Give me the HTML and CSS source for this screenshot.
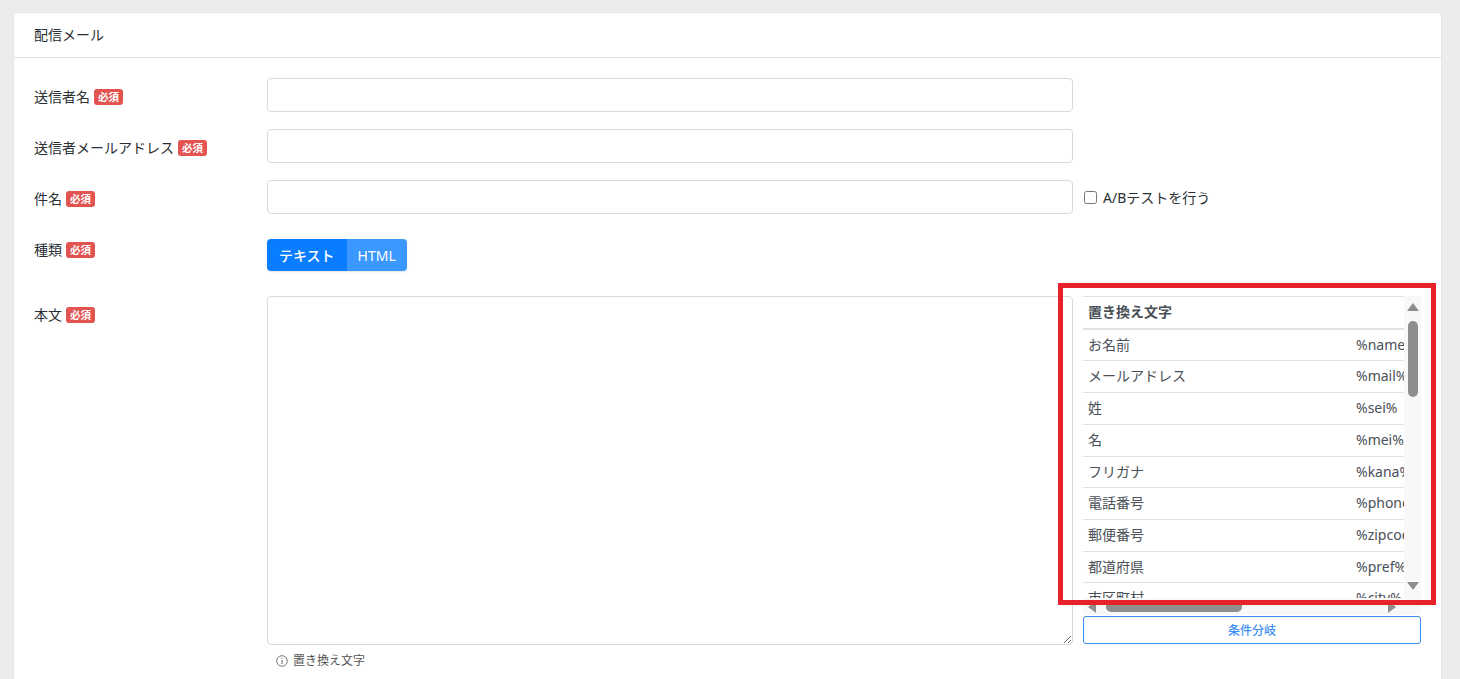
FILE: index.html
```html
<!DOCTYPE html>
<html lang="ja">
  <head>
    <meta charset="UTF-8" />
    <meta name="viewport" content="width=device-width, initial-scale=1.0" />
    <title>配信メール</title>
    <link rel="stylesheet" href="styles.css">
  </head>
  <body>
    <div class="card">
      <div class="card-header">配信メール</div>

      <div class="card-body">
        <!-- 送信者名 -->
        <div class="form-row">
          <div class="form-label">送信者名<span class="badge">必須</span></div>
          <div class="form-main"><input type="text" class="form-control"></div>
          <div class="form-side"></div>
        </div>

        <!-- 送信者メールアドレス -->
        <div class="form-row">
          <div class="form-label">送信者メールアドレス<span class="badge">必須</span></div>
          <div class="form-main"><input type="text" class="form-control"></div>
          <div class="form-side"></div>
        </div>

        <!-- 件名 -->
        <div class="form-row">
          <div class="form-label">件名<span class="badge">必須</span></div>
          <div class="form-main"><input type="text" class="form-control"></div>
          <div class="form-side">
            <label class="check">
              <input type="checkbox">
              <span>A/Bテストを行う</span>
            </label>
          </div>
        </div>

        <!-- 種類 -->
        <div class="form-row">
          <div class="form-label">種類<span class="badge">必須</span></div>
          <div class="form-main">
            <div class="btn-group">
              <button class="btn-type active">テキスト</button>
              <button class="btn-type">HTML</button>
            </div>
          </div>
          <div class="form-side"></div>
        </div>

        <!-- 本文 -->
        <div class="form-row">
          <div class="form-label">本文<span class="badge">必須</span></div>
          <div class="form-main">
            <textarea class="form-control body-text"></textarea>
            <div class="help">
              <svg width="12" height="12" viewBox="0 0 12 12">
                <circle cx="6" cy="6" r="5.3" fill="none" stroke="#666" stroke-width="0.9"/>
                <rect x="5.5" y="5" width="1" height="4" fill="#666"/>
                <rect x="5.5" y="3" width="1" height="1" fill="#666"/>
              </svg>
              置き換え文字
            </div>
          </div>
          <div class="form-side">
            <div class="side-body">
              <div class="vars">
                <div class="vars-view">
                  <table class="vars-table">
                    <colgroup>
                      <col class="col-name">
                      <col class="col-code">
                      <col>
                    </colgroup>
                    <thead>
                      <tr><th colspan="3">置き換え文字</th></tr>
                    </thead>
                    <tbody id="vars-body"></tbody>
                  </table>
                </div>
                <!-- スクロールバー -->
                <div class="vbar">
                  <span class="arr arr-up"></span>
                  <div class="vtrack"><div class="vthumb"></div></div>
                  <span class="arr arr-down"></span>
                </div>
                <div class="hbar">
                  <span class="arr arr-left"></span>
                  <div class="htrack"><div class="hthumb"></div></div>
                  <span class="arr arr-right"></span>
                </div>
                <div class="corner"></div>
              </div>
              <button class="btn-outline">条件分岐</button>
              <div class="mark"></div>
            </div>
          </div>
        </div>
      </div>
    </div>

    <script>
// 置き換え文字の一覧
const vars = [
  ['お名前', '%name%'],
  ['メールアドレス', '%mail%'],
  ['姓', '%sei%'],
  ['名', '%mei%'],
  ['フリガナ', '%kana%'],
  ['電話番号', '%phone%'],
  ['郵便番号', '%zipcode%'],
  ['都道府県', '%pref%'],
  ['市区町村', '%city%'],
  ['番地', '%address%'],
  ['建物名', '%building%'],
  ['会社名', '%company%'],
  ['部署名', '%department%'],
  ['役職', '%position%'],
  ['生年月日', '%birthday%'],
  ['性別', '%gender%'],
  ['年齢', '%age%'],
  ['携帯電話番号', '%mobile%'],
  ['FAX番号', '%fax%'],
  ['ホームページURL', '%url%'],
  ['登録日', '%regist_date%'],
  ['配信日', '%send_date%'],
  ['配信停止URL', '%stop_url%'],
  ['登録変更URL', '%change_url%'],
];

const tbody = document.getElementById('vars-body');
vars.forEach(([label, code]) => {
  const tr = document.createElement('tr');
  tr.innerHTML = `<td>${label}</td><td>${code}</td><td></td>`;
  tbody.appendChild(tr);
});
    </script>
  </body>
</html>
```

FILE: styles.css
```css
html {
  overflow: hidden;
}

body {
  margin: 12px 18px 0 13px;
  background: #ebecee;
  font-family: "Noto Sans", "Noto Sans CJK JP", sans-serif;
  font-size: 14px;
  line-height: 21px;
  color: #2b2f33;
}

/* カード */
.card {
  background: #fff;
  border: 1px solid #e3e5e8;
  border-radius: 4px;
}

.card-header {
  padding: 11px 20px 12px;
  border-bottom: 1px solid #dfe1e4;
}

.card-body {
  padding: 20px;
}

/* フォーム行 */
.form-row {
  display: grid;
  grid-template-columns: 233px 806px 1fr;
  margin-bottom: 17px;
}

.form-label {
  padding-top: 8px;
  display: flex;
  align-items: center;
  align-self: start;
  height: 21px;
}

.badge {
  display: inline-block;
  margin-left: 4px;
  padding: 2px 4px;
  background: #e3534f;
  color: #fff;
  font-size: 10.5px;
  line-height: 12px;
  font-weight: 700;
  border-radius: 3px;
}

.form-control {
  display: block;
  box-sizing: border-box;
  width: 100%;
  height: 34px;
  border: 1px solid #d7d9dd;
  border-radius: 4px;
  font-family: inherit;
  font-size: 14px;
}

.form-side {
  padding-left: 10px;
  display: flex;
  align-items: flex-start;
}

/* A/Bテスト */
.check {
  display: flex;
  align-items: center;
  height: 34px;
  padding-left: 1px;
  font-size: 14px;
}
.check input {
  margin: 0 6px 0 0;
  width: 13px;
  height: 13px;
}

/* 種類 */
.btn-group {
  display: flex;
  margin-top: 8px;
  margin-bottom: 8px;
  border-radius: 4px;
  overflow: hidden;
  width: max-content;
  box-shadow: 0 1px 2px rgba(0, 0, 0, 0.1);
}
.btn-type {
  height: 32px;
  padding: 0 11px;
  border: none;
  background: #3b98ff;
  color: #fff;
  font-family: inherit;
  font-size: 14px;
}
.btn-type.active {
  padding: 0 12px;
  background: #087dff;
  font-weight: 500;
}

/* 本文 */
.body-text {
  height: 349px;
  resize: vertical;
}

.help {
  display: flex;
  align-items: center;
  gap: 5px;
  margin-top: 7px;
  padding-left: 9px;
  font-size: 12px;
  line-height: 18px;
  color: #555;
}

/* 置き換え文字 */
.side-body {
  position: relative;
  width: 338px;
}

.vars {
  display: grid;
  grid-template-columns: 321px 17px;
  grid-template-rows: 302px 17px;
  background: #fff;
}

.vars-view {
  overflow: hidden;
}

.vars-table {
  table-layout: fixed;
  width: 680px;
  border-collapse: collapse;
  color: #4a5057;
}
.col-name {
  width: 268px;
}
.col-code {
  width: 140px;
}
.vars-table th,
.vars-table td {
  padding: 5px;
  line-height: 20.7px;
  text-align: left;
  border-top: 1px solid #dee2e6;
  white-space: nowrap;
}
.vars-table th {
  font-weight: 700;
  border-bottom: 2px solid #dee2e6;
}

/* スクロールバー */
.vbar {
  display: flex;
  flex-direction: column;
  align-items: center;
  background: #f8f8f8;
}
.vtrack {
  flex: 1;
  padding-top: 10px;
}
.vthumb {
  width: 10px;
  height: 76px;
  border-radius: 5px;
  background: #8e8e8e;
}

.hbar {
  display: flex;
  align-items: center;
  background: #f8f8f8;
}
.htrack {
  flex: 1;
  padding-left: 10px;
}
.hthumb {
  width: 136px;
  height: 11px;
  border-radius: 5px;
  background: #8e8e8e;
}

.corner {
  background: #f8f8f8;
}

.arr {
  width: 0;
  height: 0;
  border-style: solid;
  border-color: transparent;
}
.arr-up {
  margin-top: 7px;
  border-width: 0 6px 8px;
  border-bottom-color: #8e8e8e;
}
.arr-down {
  margin-bottom: 8px;
  border-width: 8px 6px 0;
  border-top-color: #8e8e8e;
}
.arr-left {
  margin-left: 5px;
  border-width: 6px 8px 6px 0;
  border-right-color: #8e8e8e;
}
.arr-right {
  margin-right: 8px;
  border-width: 6px 0 6px 8px;
  border-left-color: #8e8e8e;
}

.btn-outline {
  display: block;
  width: 100%;
  height: 28px;
  margin-top: 1px;
  background: #fff;
  border: 1px solid #3d8ef2;
  border-radius: 3px;
  color: #3d8ef2;
  font-family: inherit;
  font-size: 12px;
  font-weight: 500;
}

/* 注目枠 */
.mark {
  position: absolute;
  left: -25px;
  top: -13px;
  width: 378px;
  height: 322px;
  box-sizing: border-box;
  border: 5px solid #e8202a;
  pointer-events: none;
}
```
